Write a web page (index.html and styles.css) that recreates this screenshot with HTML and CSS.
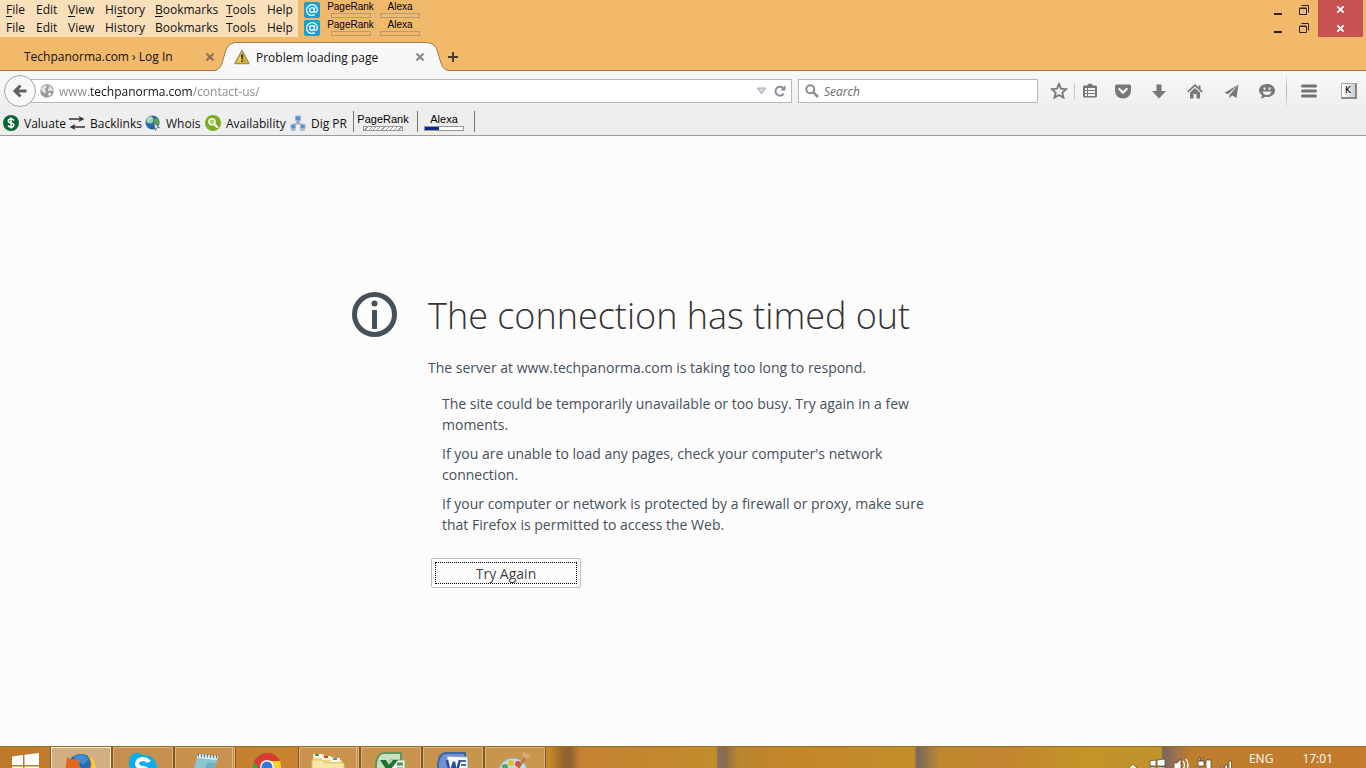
FILE: index.html
```html
<!DOCTYPE html>
<html lang="en">
<head>
<meta charset="utf-8">
<title>Problem loading page</title>
<link rel="stylesheet" href="styles.css">
</head>
<body>
<svg class="defs" aria-hidden="true">
  <symbol id="at" viewBox="0 0 16 16"><rect width="16" height="16" rx="2" fill="#18a0d4"/><circle cx="8" cy="8" r="2.4" fill="none" stroke="#fff" stroke-width="1.3"/><path d="M10.4 5.5v3.600q0 1.500 1.300 1.300Q13.400 10 13.300 7.500A5.400 5.400 0 1 0 10.800 12.600" fill="none" stroke="#fff" stroke-width="1.200"/></symbol>
  <symbol id="restore" viewBox="0 0 12 12"><path d="M1.500 4.500h7v6h-7zM1.500 4h7M3.500 1.500h7v7" fill="none" stroke="#30230f"/></symbol>
  <symbol id="cross" viewBox="0 0 10 10"><path d="M1.500 1.500l7 7M8.500 1.500l-7 7" fill="none" stroke="currentColor" stroke-width="2.200"/></symbol>
</svg>

<header>
  <div class="menus">
    <div class="menu-row">
      <nav class="menu" aria-label="Menu bar">
        <button><u>F</u>ile</button><button>Edit</button><button><u>V</u>iew</button><button>Hi<u>s</u>tory</button><button><u>B</u>ookmarks</button><button><u>T</u>ools</button><button>Help</button>
      </nav>
      <svg class="at" width="16" height="16"><use href="#at"/></svg>
      <div class="rank"><span>PageRank</span><i></i></div>
      <div class="rank"><span>Alexa</span><i></i></div>
      <div class="window-buttons">
        <button aria-label="Minimize"><svg width="10" height="12"><path d="M1 9h8v2H1z" fill="#30230f"/></svg></button>
        <button aria-label="Restore"><svg width="12" height="12"><use href="#restore"/></svg></button>
        <button class="close" aria-label="Close"><svg width="9" height="9"><use href="#cross"/></svg></button>
      </div>
    </div>
    <div class="menu-row">
      <nav class="menu" aria-label="Second menu bar">
        <button>File</button><button>Edit</button><button>View</button><button>History</button><button>Bookmarks</button><button>Tools</button><button>Help</button>
      </nav>
      <svg class="at" width="16" height="16"><use href="#at"/></svg>
      <div class="rank"><span>PageRank</span><i></i></div>
      <div class="rank"><span>Alexa</span><i></i></div>
      <div class="window-buttons">
        <button aria-label="Minimize"><svg width="10" height="12"><path d="M1 9h8v2H1z" fill="#30230f"/></svg></button>
        <button aria-label="Restore"><svg width="12" height="12"><use href="#restore"/></svg></button>
        <button class="close" aria-label="Close"><svg width="9" height="9"><use href="#cross"/></svg></button>
      </div>
    </div>
  </div>

  <div class="tabs">
    <div class="tab">
      <button class="tab-title">Techpanorma.com › Log In</button>
      <button class="tab-close" aria-label="Close tab"><svg width="10" height="10"><use href="#cross"/></svg></button>
    </div>
    <svg class="curve" width="24" height="29" viewBox="0 0 24 29"><path d="M0 29C5 28 7 25 9 18C12 7 13 .5 24 .5V29z" fill="#f8f8f8"/><path d="M0 28.500C5 28 7 25 9 18C12 7 13 .5 24 .5" fill="none" stroke="#9c7a4c"/></svg>
    <div class="tab selected">
      <svg width="16" height="16" viewBox="0 0 16 16"><path d="M8 1.500L15 14.500H1z" fill="#f4cf2e" stroke="#9a8f70" stroke-width="1.500" stroke-linejoin="round"/><path d="M8 3.500L13.200 13.300H8z" fill="#d7a915"/><path d="M7 5.500h2l-.4 5H7.400zM7.200 11.400h1.700V13H7.200z" fill="#222"/></svg>
      <button class="tab-title">Problem loading page</button>
      <button class="tab-close" aria-label="Close tab"><svg width="10" height="10"><use href="#cross"/></svg></button>
    </div>
    <svg class="curve" width="24" height="29" viewBox="0 0 24 29"><path d="M24 29C19 28 17 25 15 18C12 7 11 .5 0 .5V29z" fill="#f8f8f8"/><path d="M24 28.500C19 28 17 25 15 18C12 7 11 .5 0 .5" fill="none" stroke="#9c7a4c"/></svg>
    <button class="new-tab" aria-label="New tab"><svg width="12" height="12"><path d="M6 1v10M1 6h10" stroke="#4a3c28" stroke-width="2"/></svg></button>
  </div>

  <div class="toolbars">
    <div class="nav">
      <button class="back" aria-label="Back"><svg width="16" height="16" viewBox="0 0 16 16"><path d="M8.500 2.500L3 8l5.500 5.500M3.500 8H14.500" fill="none" stroke="#5e6266" stroke-width="3"/></svg></button>
      <div class="url">
        <svg width="14" height="14" viewBox="0 0 14 14"><circle cx="7" cy="7" r="6.800" fill="#989b9f"/><path d="M2 3.500L5 1.500 7 2 6 4 4.500 5 6 7 5 9.500 3 8 1 6zM9 1.500L12 4l1 3-2-.5L9 7.500 7.500 5.500 9 4zM8 9l3 0 .5 1.500-2.500 2.300z" fill="#e4e6e8"/></svg>
        <input class="address" type="text" aria-label="Address" value="www.techpanorma.com/contact-us/">
        <button aria-label="History"><svg width="9" height="8"><path d="M.5 1h8L4.500 7z" fill="#d5d8e0" stroke="#a5a9b2"/></svg></button>
        <button aria-label="Reload"><svg width="12" height="12" viewBox="0 0 12 12"><path d="M9.800 8.500A4.500 4.500 0 1 1 9 2.800" fill="none" stroke="#8b909a" stroke-width="2"/><path d="M11.500 0v5.500H6z" fill="#8b909a"/></svg></button>
      </div>
      <label class="search">
        <svg width="14" height="14" viewBox="0 0 14 14"><circle cx="5.300" cy="5.300" r="4" fill="none" stroke="#8d8d8d" stroke-width="2"/><path d="M8.300 8.300l4.700 4.700" stroke="#8d8d8d" stroke-width="2.600"/></svg>
        <input type="search" aria-label="Search" placeholder="Search">
      </label>
      <div class="actions">
        <button class="star" aria-label="Bookmark this page"><svg width="18" height="18" viewBox="0 0 18 18"><path d="M9 2l2.100 4.700 5.100.5-3.900 3.400 1.200 5L9 13l-4.500 2.600 1.200-5L1.800 7.200l5.100-.5z" fill="none" stroke="#75787b" stroke-width="1.800"/></svg></button>
        <button class="list" aria-label="Bookmarks"><svg width="14" height="16" viewBox="0 0 14 16"><path d="M4 2.500L5.500.8h3L10 2.500h3L14 3.500v10L13 14.500H1L0 13.500v-10l1-1z" fill="#75787b"/><path d="M2 5h2v2H2zm3 0h7v2H5zM2 8h2v2H2zm3 0h7v2H5zM2 11h2v2H2zm3 0h7v2H5z" fill="#f4f4f4"/></svg></button>
        <button aria-label="Pocket"><svg width="16" height="15" viewBox="0 0 16 15"><path d="M1.500.5h13Q16 .5 16 2v4.500A8 8 0 0 1 0 6.500V2Q0 .5 1.500.5z" fill="#75787b"/><path d="M4.300 5L8 8.600 11.700 5" fill="none" stroke="#f4f4f4" stroke-width="2.200" stroke-linecap="round" stroke-linejoin="round"/></svg></button>
        <button aria-label="Downloads"><svg width="14" height="15" viewBox="0 0 14 15"><path d="M4.500.5h5V7H14l-7 7.500L0 7h4.500z" fill="#75787b"/></svg></button>
        <button aria-label="Home"><svg width="16" height="15" viewBox="0 0 16 15"><path d="M.8 7.800L8 1.200l7.200 6.600" fill="none" stroke="#75787b" stroke-width="1.800"/><path d="M3 8.500l5-4.600 5 4.600V14.500H9.500V10h-3v4.500H3zM11.500 1.500h2v3.500l-2-1.800z" fill="#75787b"/></svg></button>
        <button aria-label="Send"><svg width="15" height="15" viewBox="0 0 15 15"><path d="M14.500.5L.5 8.800 4 10.200zM14.500.5L5.500 11v3.500l2-2.500zM14.500.5L7.500 11l5 3z" fill="#75787b"/></svg></button>
        <button aria-label="Chat"><svg width="16" height="16" viewBox="0 0 16 16"><path d="M8 1c4.500 0 8 2.800 8 6.500S12.500 14 8 14l-2-.2Q4 15.500 1.500 15.500 3 14 3 12.500 0 10.600 0 7.500C0 3.800 3.500 1 8 1z" fill="#75787b"/><path d="M4.600 4.500h1.800v2.300H4.600zm5 0h1.800v2.300H9.600zM3.500 8.500h9Q11.500 12 8 12T3.500 8.500z" fill="#f4f4f4"/></svg></button>
        <button class="app-menu" aria-label="Open menu"><svg width="16" height="14"><path d="M1.500 2h13M1.500 7h13M1.500 12h13" stroke="#707376" stroke-width="3" stroke-linecap="round"/></svg></button>
        <button class="key"><span>K</span></button>
      </div>
    </div>

    <div class="links">
      <a href="#"><svg width="16" height="16" viewBox="0 0 16 16"><circle cx="8" cy="8" r="8" fill="#0d6435"/><path d="M11 5.500Q10 4 8 4 5.300 4 5.300 6 5.300 7.500 8 8T10.800 10.200Q10.800 12 8 12 6 12 5 10.500M8 2.500v11" fill="none" stroke="#fff" stroke-width="1.500"/></svg>Valuate</a>
      <a href="#"><svg width="16" height="16" viewBox="0 0 16 16"><path d="M0 4h11M4 12h12" stroke="#333" stroke-width="1.300"/><path d="M9.500 1l6 3-6 3 1.500-3zM6.500 9l-6 3 6 3L5 12z" fill="#333"/></svg>Backlinks</a>
      <a href="#"><svg width="16" height="16" viewBox="0 0 16 16"><circle cx="7.500" cy="7.500" r="7" fill="#2765ad"/><path d="M1.500 4L5 1l3 .5L6.500 5 4 7 1.500 8zM9 4l4-1 1.500 5-3 3.500-2.500-3z" fill="#53a84a"/><circle cx="5" cy="5" r="3.500" fill="#d9f2ef" opacity=".65"/><path d="M8.500 7.500l6 5-2.800.4-1.200 2.600z" fill="#e3ebf3" stroke="#456" stroke-width=".7"/></svg>Whois</a>
      <a href="#"><svg width="16" height="16" viewBox="0 0 16 16"><circle cx="8" cy="8" r="8" fill="#7cad24"/><circle cx="7" cy="6.800" r="3" fill="#a9cd62" stroke="#fff" stroke-width="1.500"/><path d="M9.200 9l3.600 3.700" stroke="#fff" stroke-width="2"/></svg>Availability</a>
      <a href="#"><svg width="16" height="16" viewBox="0 0 16 16"><path d="M8 6v3M3 12V9h10v3" fill="none" stroke="#8295a8"/><path d="M5.500 1h5v4.500h-5zM1 9.500h4.500v4H1zM10.500 9.500H15v4h-4.500z" fill="#4f94d8" stroke="#9fb4c8"/><path d="M6 7h4M1 15h4.500M10 15h4.500" stroke="#738599"/></svg>Dig PR</a>
      <div class="rank"><span>PageRank</span><i class="hatched"></i></div>
      <div class="rank"><span>Alexa</span><i class="partial"></i></div>
    </div>
  </div>
</header>

<main>
  <section class="error">
    <svg class="info" width="46" height="46" viewBox="0 0 46 46"><circle cx="22.500" cy="22.500" r="20" fill="none" stroke="#46505b" stroke-width="5"/><circle cx="22.500" cy="11.500" r="3" fill="#46505b"/><path d="M20 18h5v19h-5z" fill="#46505b"/></svg>
    <div class="message">
      <h1>The connection has timed out</h1>
      <p>The server at www.techpanorma.com is taking too long to respond.</p>
      <ul>
        <li>The site could be temporarily unavailable or too busy. Try again in a few moments.</li>
        <li>If you are unable to load any pages, check your computer's network connection.</li>
        <li>If your computer or network is protected by a firewall or proxy, make sure that Firefox is permitted to access the Web.</li>
      </ul>
      <button class="retry"><span>Try Again</span></button>
    </div>
  </section>
</main>

<footer class="taskbar">
  <button class="start" aria-label="Start"><svg width="27" height="27" viewBox="0 0 27 27"><path d="M0 3.500l11-1.500V12H0zM12.500 1.800L27 0v12H12.500zM0 13.500h11v11L0 23zM12.500 13.500H27V27l-14.500-2z" fill="#fff"/></svg></button>
  <button class="task active" aria-label="Firefox"><svg width="32" height="32" viewBox="0 0 32 32"><circle cx="16" cy="16" r="14" fill="#246bb2"/><path d="M9 4Q18 0 24 7L19 12 11 9z" fill="#3f8fd0"/><path d="M2 5Q5 8 9 7 12 8 15 9 13 13 16 16 20 20 25 15 27 9 22 3 31 8 31 17 29 31 15 31 0 29 1 14z" fill="#e2661f"/><path d="M22 3Q29 10 25 18 23 25 17 27 31 26 31 15 30 7 22 3z" fill="#f5cf45"/></svg></button>
  <button class="task" aria-label="Skype"><svg width="32" height="32" viewBox="0 0 32 32"><path d="M8 1Q12 0 15 3 28 2 30 15 30 19 29 20 31 30 21 31H16Q3 30 3 17-1 5 8 1z" fill="#0baeea"/><path d="M22 10Q20 7 15 7 10 8 10 12 11 16 16 16 22 17 22 21 21 25 16 25 11 25 9 21" fill="none" stroke="#fff" stroke-width="4"/></svg></button>
  <button class="task stacked" aria-label="Notepad"><svg width="32" height="32" viewBox="0 0 32 32"><path d="M10 2l20 2-7 28H2z" fill="#8cc6d3"/><path d="M10 2l20 2-1 4-20-2z" fill="#d9eef0"/><path d="M20 10l8 1-5 21H8z" fill="#6cb0c0"/><path d="M10 3l20 2" stroke="#56696e" stroke-width="3" stroke-dasharray="1 2"/></svg></button>
  <button class="task plain" aria-label="Chrome"><svg width="32" height="32" viewBox="0 0 32 32"><circle cx="16" cy="15" r="14" fill="#43a047"/><path d="M3 9Q9 1 16 1q9 0 13 8H16L9 18z" fill="#dc3b30"/><path d="M16 9h13q4 12-9 20l3-13z" fill="#f7cf32"/><circle cx="16" cy="15" r="7" fill="#fff"/><circle cx="16" cy="15" r="5.500" fill="#3577d4"/></svg></button>
  <button class="task stacked" aria-label="File Explorer"><svg width="34" height="32" viewBox="0 0 34 32"><path d="M2 2h10l3 3h8l2 3h6v24H2z" fill="#f3d984"/><path d="M3 2h8v4H3zM11 4h9v4h-9zM20 6h9v4h-9z" fill="#fffbe8"/><path d="M4 2h4v2H4z" fill="#3d9e50"/><path d="M13 4h4v2h-4z" fill="#ca4434"/><path d="M22 6h4v2h-4z" fill="#4b90c9"/><path d="M1 8h10l3 3h19v21H1z" fill="#f7e7a7" stroke="#dcc16a"/></svg></button>
  <button class="task" aria-label="Excel"><svg width="32" height="32" viewBox="0 0 32 32"><path d="M8 1h18v28H1V12Q2 2 8 1z" fill="#cae0c2" stroke="#65945b" stroke-width="2"/><path d="M15 8h15v24H15z" fill="#f7fbf5" stroke="#89a984"/><path d="M22 12h6M22 17h6M22 22h6" stroke="#4e914f" stroke-width="3"/><path d="M5 8h6l3 5 4-5h5l-7 9 6 9h-6l-3-6-4 6H4l7-9z" fill="#20712e"/></svg></button>
  <button class="task" aria-label="Word"><svg width="32" height="32" viewBox="0 0 32 32"><path d="M8 1h20v28H1V12Q2 2 8 1z" fill="#6e92cf" stroke="#3e65a5" stroke-width="2"/><path d="M10 4l21 1v27H10z" fill="#f7f9ff" stroke="#7e98bf"/><path d="M24 9h5M24 13h5M24 17h5M24 21h5" stroke="#48699e" stroke-width="2"/><path d="M10 8l3 14 4-12 2 12 4-14" fill="none" stroke="#244f9d" stroke-width="2.500"/></svg></button>
  <button class="task" aria-label="Paint"><svg width="32" height="32" viewBox="0 0 32 32"><ellipse cx="14" cy="19" rx="14" ry="13" fill="#c4dbe4" stroke="#91a9b2"/><circle cx="6" cy="15" r="3" fill="#54a65b"/><circle cx="12" cy="11" r="3" fill="#e3bf33"/><circle cx="19" cy="12" r="3" fill="#d54f3d"/><path d="M27 4L17 20" stroke="#b47236" stroke-width="2"/><path d="M23 0l7 2 2 1-4 4-4-2z" fill="#d9a97d"/></svg></button>
  <div class="tray">
    <svg width="104" height="22" viewBox="0 0 104 22"><g fill="#fff" stroke="#54401e" stroke-width=".7"><path d="M-1 22l5-5 5 5z"/><path d="M21 14l6-1v6h-6zM28 13l8-1v7h-8zM21 20h6v4h-6zM28 20h8v4h-8z"/><path d="M45 16h3l4-4v12h-7z"/><path d="M69 14h6v5h-6zM70 11h1.500v3H70zM73 11h1.500v3H73zM77 13h5v11h-5z"/><path d="M92 20h2.500v4H92zM96 18h2.500v6H96zM100 14h2.500v10H100z"/></g><path d="M54 14q3 4 0 8M57 12q4 6 0 12" fill="none" stroke="#fff" stroke-width="1.300"/></svg>
    <span>ENG</span><time>17:01</time>
  </div>
</footer>
</body>
</html>
```
FILE: styles.css
```css
* { box-sizing: border-box; }
body {
  margin: 0;
  min-height: 100vh;
  display: flex;
  flex-direction: column;
  font-family: "Open Sans", "Noto Sans", sans-serif;
  font-size: 12px;
  color: #111;
  background: #fcfcfc;
}
button, input { font: inherit; color: inherit; border: 0; padding: 0; margin: 0; background: none; outline: 0; }
svg { display: block; flex: none; }
.defs { position: absolute; width: 0; height: 0; }

.menus { background: #f2b96b; }
.menu-row { display: flex; height: 18px; }
.menu-row:first-child { height: 19px; padding-top: 1px; background: linear-gradient(90deg, #fae0bb 298px, transparent 298px); }
.menu {
  width: 298px;
  padding-left: 6px;
  display: grid;
  grid-template-columns: 30px 32px 37px 50px 71px 41px 31px;
  background: #f9dfba;
}
.menu button { text-align: left; line-height: 18px; }
.menu u { text-underline-offset: 2px; }
.at { margin: 1px 5px 0 6px; }
.rank {
  width: 50px;
  border-left: 1px solid #d9b98c;
  display: flex;
  flex-direction: column;
  align-items: center;
  font: 10px/11px "Liberation Sans", Arial, sans-serif;
  color: #000;
}
.rank i { width: 40px; height: 5px; margin-top: 1px; border: 1px solid #b39b78; }
.menu-row .rank:nth-of-type(2) { border-right: 1px solid #d9b98c; }
.window-buttons { display: flex; margin-left: auto; padding-right: 3px; }
.window-buttons button { width: 26px; display: grid; place-items: center; }
.window-buttons .close { width: 45px; margin-left: 1px; color: #fff; background: #c75050; }
.menu-row:first-child .close { margin-top: -1px; }

.tabs {
  height: 34px;
  display: flex;
  align-items: flex-end;
  background: #f2b96b;
  box-shadow: inset 0 -1px #9c7a4c;
}
.tab { display: flex; align-items: center; width: 215px; height: 29px; padding-left: 24px; }
.tab-title { flex: 1; text-align: left; white-space: nowrap; }
.tab-close { color: #8a7458; }
.curve { margin-left: -1px; }
.tab.selected { width: 191px; padding-left: 0; gap: 6px; margin-left: -4px; border-top: 1px solid #9c7a4c; background: #f8f8f8; }
.selected .tab-close { color: #85888c; }
.selected + .curve { margin: 0; }
.new-tab { height: 29px; margin-left: -2px; display: grid; place-items: center; }

.toolbars { background: linear-gradient(#f8f8f8, #eeeeee 40px); border-bottom: 1px solid #9a9a9a; }
.nav { display: flex; align-items: center; height: 40px; padding-left: 4px; }
.back {
  width: 32px;
  height: 32px;
  border: 1px solid #a3a6a9;
  border-radius: 50%;
  background: #f8f8f8;
  display: grid;
  place-items: center;
  z-index: 1;
}
.url, .search { display: flex; align-items: center; height: 24px; border: 1px solid #b4b8bf; background: #fff; }
.url { flex: 1; margin-left: -8px; padding: 0 5px 0 11px; gap: 5px; }
.address {
  flex: 1;
  min-width: 0;
  -webkit-text-fill-color: transparent;
  background: linear-gradient(90deg, #888 30px, #111 30px 134px, #888 134px);
  -webkit-background-clip: text;
  background-clip: text;
}
.url button { margin-left: 3px; }
.search { width: 240px; margin-left: 6px; padding-left: 6px; gap: 5px; }
.search input { width: 200px; }
.search input::placeholder { color: #696969; font-style: italic; opacity: 1; }
.actions { display: flex; align-items: stretch; height: 36px; margin-left: 6px; }
.actions button { width: 36px; display: grid; place-items: center; }
.actions .star { width: 30px; }
.actions .list { width: 31px; background: linear-gradient(#c8c8c8, #c8c8c8) 0 50% / 1px 16px no-repeat; }
.actions .app-menu { width: 45px; margin-left: 1px; background: linear-gradient(transparent, #aaa, transparent) 0 0 / 1px 100% no-repeat; }
.actions .key { width: 35px; }
.key span {
  width: 16px;
  height: 16px;
  border: 1px solid #aaa;
  border-right: 2px solid #888;
  border-bottom: 2px solid #888;
  background: linear-gradient(90deg, #fff, #ccc);
  color: #000;
  font: 9px/12px "DejaVu Sans", sans-serif;
  text-align: center;
}
.links {
  display: grid;
  grid-template-columns: 66px 76px 60px 85px 63px 64px 58px;
  height: 24px;
  padding-left: 3px;
}
.links a { display: flex; align-items: center; gap: 5px; color: #111; text-decoration: none; white-space: nowrap; }
.links .rank { width: auto; border-left: 1px solid #777; padding-top: 2px; height: 21px; font-size: 11px; line-height: 12px; }
.links .rank:nth-of-type(1) { padding-right: 5px; }
.links .rank:nth-of-type(2) { padding-right: 4px; border-right: 1px solid #777; }
.links .rank i { border-color: #999; background: #fff; }
.links .rank .hatched { background: repeating-linear-gradient(135deg, #fff 0 2px, #999 2px 3px); }
.links .rank .partial { background: linear-gradient(90deg, #0b2a8c 14px, #fff 14px); }

main { flex: 1; display: flex; align-items: center; justify-content: center; padding-bottom: 2px; }
.error { display: flex; width: 662px; max-width: 100%; gap: 30px; color: #46505b; font-size: 14px; line-height: 21px; }
.message { flex: 1; }
h1 { margin: 0; color: #333; font-size: 36px; font-weight: 300; line-height: 48px; white-space: nowrap; }
p { margin: 17px 0 15px; }
ul { list-style: none; margin: 0; padding: 0 0 0 14px; max-width: 514px; }
li + li { margin-top: 8px; }
.retry {
  width: 150px;
  height: 30px;
  margin: 23px 0 0 3px;
  padding: 3px;
  display: block;
  border: 1px solid #bbb;
  border-radius: 2px;
  background: #fcfcfc;
  color: #444;
}
.retry span { display: block; height: 22px; border: 1px dotted #000; }

.taskbar {
  height: 22px;
  display: flex;
  overflow: hidden;
  color: #fff;
  border-top: 1px solid #92702c;
  background: linear-gradient(90deg, #bd7a2b, #c7832e 298px, #c48928 550px, #94672d 563px, #8c6234 570px, #c58131 580px, #c28c2c 716px, #85705c 718px, #8a6b50 725px, #b9852d 738px, #c5852b 790px, #c28e2a 914px, #77675e 917px, #8b7254 924px, #bd892d 940px, #c48330 1000px, #c39429 1080px, #bf922c 1161px, #79655b 1163px, #957152 1174px, #bd7d2e 1190px, #c47b2b);
}
.taskbar button { flex: none; display: flex; justify-content: center; align-items: flex-start; }
.start { width: 50px; padding-top: 6px; }
.task { width: 60px; height: 40px; margin: 0 1px; padding-top: 4px; border: 1px solid #dbb382; background: rgba(205, 170, 130, .4); box-shadow: 0 0 0 1px #835923; }
.task.active { border-color: #fff2d8; background: #d3ae7e; }
.task.plain { border-color: transparent; background: none; box-shadow: none; }
.task.stacked { border-right: 3px double #ddb57f; }
.tray { margin-left: auto; display: flex; align-items: flex-start; padding-right: 33px; line-height: 24px; }
.tray span { margin: 0 33px 0 16px; }
.tray span { margin-right: 29px; }
```
